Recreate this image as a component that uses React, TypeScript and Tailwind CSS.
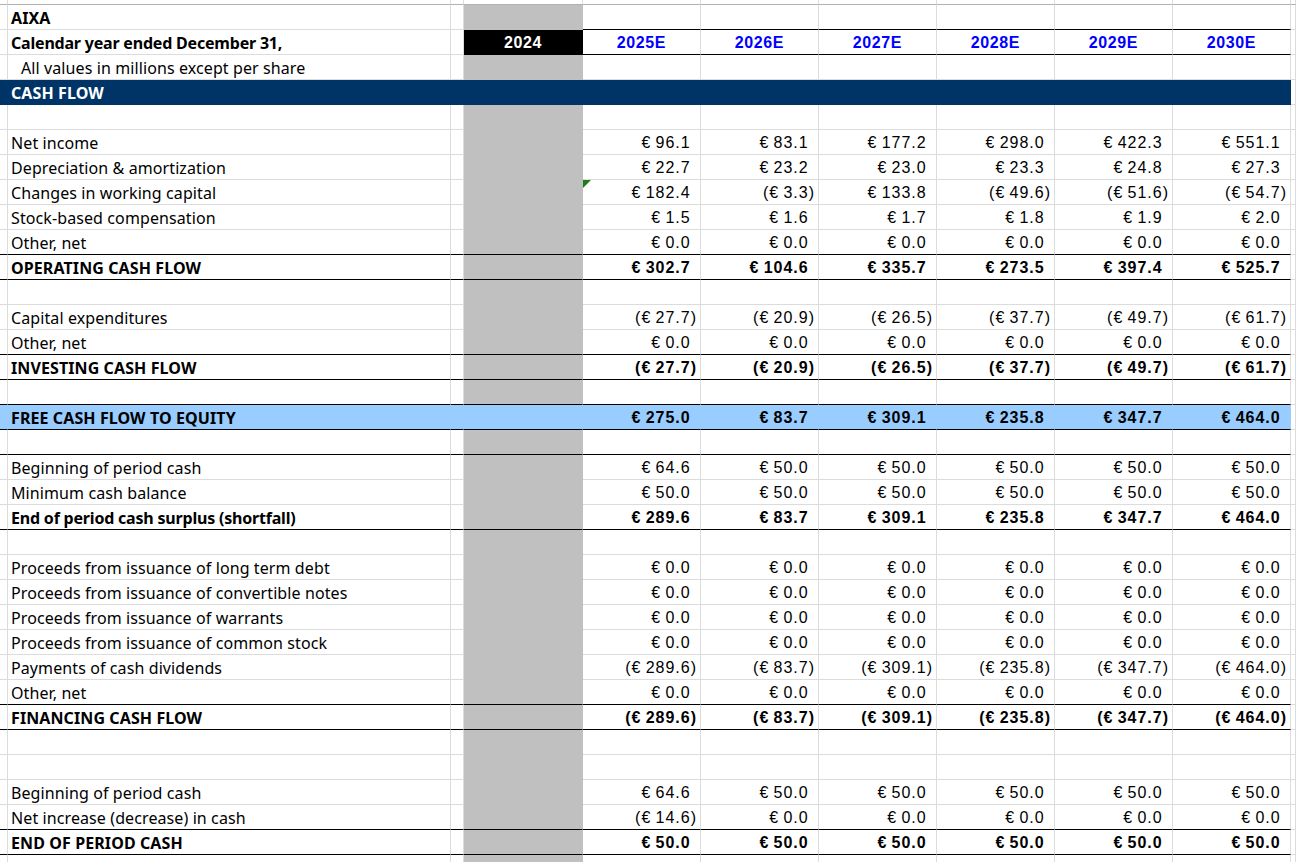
import clsx from "clsx";

type Fill = "white" | "gray" | "black" | "navy" | "blue";

type RowDef = {
  label?: string;
  bold?: boolean;
  indent?: boolean;
  values?: number[];
  fill?: "navy" | "blue";
  line?: boolean; // black rule under the row
  flag?: boolean; // green error marker in first forecast cell
};

const YEARS = ["2025E", "2026E", "2027E", "2028E", "2029E", "2030E"];
const zeros = [0, 0, 0, 0, 0, 0];

const ROWS: RowDef[] = [
  { label: "AIXA", bold: true },
  { label: "Calendar year ended December 31,", bold: true },
  { label: "All values in millions except per share", indent: true },
  { label: "CASH FLOW", bold: true, fill: "navy" },
  {},
  { label: "Net income", values: [96.1, 83.1, 177.2, 298.0, 422.3, 551.1] },
  { label: "Depreciation & amortization", values: [22.7, 23.2, 23.0, 23.3, 24.8, 27.3] },
  { label: "Changes in working capital", values: [182.4, -3.3, 133.8, -49.6, -51.6, -54.7], flag: true },
  { label: "Stock-based compensation", values: [1.5, 1.6, 1.7, 1.8, 1.9, 2.0] },
  { label: "Other, net", values: zeros, line: true },
  { label: "OPERATING CASH FLOW", bold: true, values: [302.7, 104.6, 335.7, 273.5, 397.4, 525.7], line: true },
  {},
  { label: "Capital expenditures", values: [-27.7, -20.9, -26.5, -37.7, -49.7, -61.7] },
  { label: "Other, net", values: zeros, line: true },
  { label: "INVESTING CASH FLOW", bold: true, values: [-27.7, -20.9, -26.5, -37.7, -49.7, -61.7], line: true },
  { line: true },
  { label: "FREE CASH FLOW TO EQUITY", bold: true, fill: "blue", values: [275.0, 83.7, 309.1, 235.8, 347.7, 464.0], line: true },
  { line: true },
  { label: "Beginning of period cash", values: [64.6, 50.0, 50.0, 50.0, 50.0, 50.0] },
  { label: "Minimum cash balance", values: [50.0, 50.0, 50.0, 50.0, 50.0, 50.0] },
  { label: "End of period cash surplus (shortfall)", bold: true, values: [289.6, 83.7, 309.1, 235.8, 347.7, 464.0], line: true },
  {},
  { label: "Proceeds from issuance of long term debt", values: zeros },
  { label: "Proceeds from issuance of convertible notes", values: zeros },
  { label: "Proceeds from issuance of warrants", values: zeros },
  { label: "Proceeds from issuance of common stock", values: zeros },
  { label: "Payments of cash dividends", values: [-289.6, -83.7, -309.1, -235.8, -347.7, -464.0] },
  { label: "Other, net", values: zeros, line: true },
  { label: "FINANCING CASH FLOW", bold: true, values: [-289.6, -83.7, -309.1, -235.8, -347.7, -464.0], line: true },
  {},
  {},
  { label: "Beginning of period cash", values: [64.6, 50.0, 50.0, 50.0, 50.0, 50.0] },
  { label: "Net increase (decrease) in cash", values: [-14.6, 0, 0, 0, 0, 0], line: true },
  { label: "END OF PERIOD CASH", bold: true, values: [50.0, 50.0, 50.0, 50.0, 50.0, 50.0], line: true },
  {},
  {},
];

const BG: Record<Fill, string> = {
  white: "bg-white",
  gray: "bg-[#c0c0c0]",
  black: "bg-black",
  navy: "bg-[#003366]",
  blue: "bg-[#99ccff]",
};
const BB: Record<Fill, string> = {
  white: "border-b-[#dcdcdc]",
  gray: "border-b-[#c0c0c0]",
  black: "border-b-black",
  navy: "border-b-[#003366]",
  blue: "border-b-[#99ccff]",
};
const BR: Record<Fill, string> = {
  white: "border-r-[#dcdcdc]",
  gray: "border-r-[#c0c0c0]",
  black: "border-r-black",
  navy: "border-r-[#003366]",
  blue: "border-r-[#99ccff]",
};

const LABEL_FONT = "font-['Noto_Sans',sans-serif] text-[16px]";
const NUM_FONT = "font-['Liberation_Sans',Arial,sans-serif] text-[16px]";

// accounting format: € #,##0.0_);(€ #,##0.0)
function Amount({ v }: { v: number }) {
  const s = Math.abs(v).toFixed(1);
  if (v < 0) return <span>(€{"\u2009"}{s})</span>;
  return (
    <span>
      €{"\u2009"}{s}
      <span className="invisible">)</span>
    </span>
  );
}

function Cell({
  fill,
  bottom,
  className,
  children,
}: {
  fill: Fill;
  bottom?: "black";
  className?: string;
  children?: React.ReactNode;
}) {
  return (
    <div
      className={clsx(
        "h-[25px] pt-[2px] border-r border-b flex items-center whitespace-nowrap",
        BG[fill],
        bottom ? BB.black : BB[fill],
        BR[fill],
        className
      )}
    >
      {children}
    </div>
  );
}

function SheetRow({ row, idx }: { row: RowDef; idx: number }) {
  const fill: Fill = row.fill ?? "white";
  const isHeader = idx === 1;
  const ruleUnder = row.line ? "black" : undefined;
  const dFill: Fill = row.fill ? fill : isHeader ? "black" : "gray";
  const caps = row.label !== undefined && row.label === row.label.toUpperCase();

  const labelTracking = !row.bold
    ? "tracking-[0.1px]"
    : caps
      ? "tracking-[0.1px]"
      : "tracking-[-0.2px]";

  return (
    <>
      <Cell fill={fill} bottom={ruleUnder} />
      <Cell
        fill={fill}
        bottom={ruleUnder}
        className={clsx(
          LABEL_FONT,
          labelTracking,
          row.indent ? "pl-[13px]" : "pl-[3px]",
          row.fill === "navy" ? "text-white" : "text-black",
          row.bold && "font-bold"
        )}
      >
        {row.label}
      </Cell>
      <Cell fill={fill} bottom={ruleUnder} />
      <Cell
        fill={dFill}
        bottom={ruleUnder}
        className={clsx(NUM_FONT, "justify-center font-bold text-white tracking-[0.6px]")}
      >
        {isHeader && "2024"}
      </Cell>
      {YEARS.map((y, i) => {
        const v = row.values?.[i];
        const boxed = idx === 0 || isHeader;
        return (
          <Cell
            key={y}
            fill={fill}
            bottom={ruleUnder || boxed ? "black" : undefined}
            className={clsx(
              NUM_FONT,
              "relative",
              isHeader
                ? "justify-center font-bold text-[#0000ff] tracking-[0.6px]"
                : "justify-end pr-[3px] text-black tracking-[1px]",
              row.bold && "font-bold"
            )}
          >
            {row.flag && i === 0 && (
              <span className="absolute left-0 top-0 h-0 w-0 border-t-[8px] border-r-[8px] border-t-[#1b7d1b] border-r-transparent" />
            )}
            {isHeader && y}
            {v !== undefined && <Amount v={v} />}
          </Cell>
        );
      })}
      <Cell fill="white" />
    </>
  );
}

export default function App() {
  return (
    <div className="w-[1296px] h-[862px] overflow-hidden bg-white">
      <div className="grid grid-cols-[8px_443px_13px_119px_repeat(6,118px)_1fr]">
        {/* frozen pane strip at the top */}
        {Array.from({ length: 11 }).map((_, i) => (
          <div key={i} className="h-[5px] border-r border-r-[#dcdcdc] border-b border-b-[#b0b0b0] bg-white" />
        ))}
        {ROWS.map((row, idx) => (
          <SheetRow key={idx} row={row} idx={idx} />
        ))}
      </div>
    </div>
  );
}
